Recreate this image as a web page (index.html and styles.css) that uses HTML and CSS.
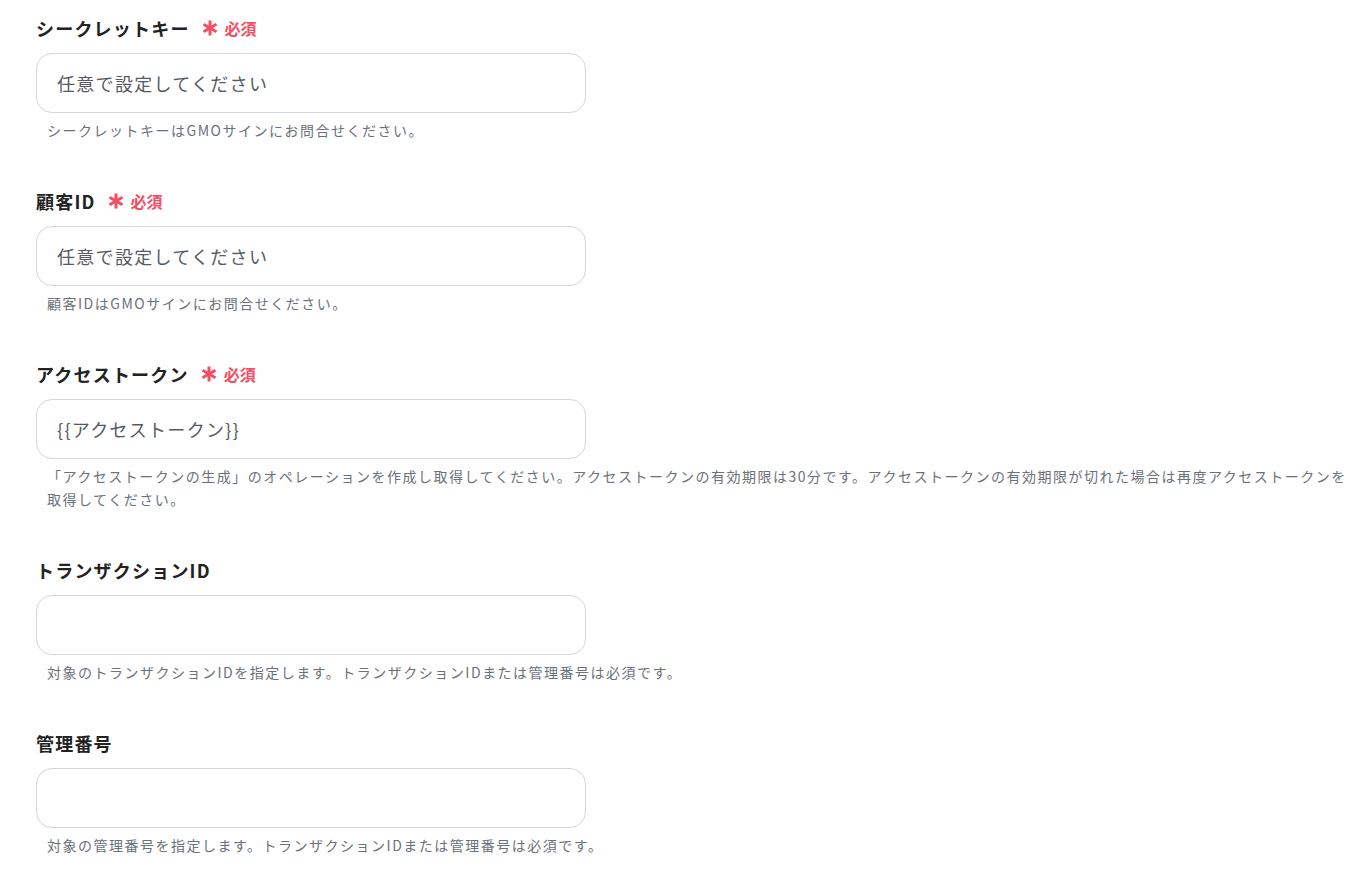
FILE: index.html
```html
<!DOCTYPE html>
<html lang="ja">
<head>
<meta charset="utf-8">
<link rel="stylesheet" href="styles.css">
</head>
<body>
<main class="form">
  <section class="field">
    <div class="label">シークレットキー <span class="req"><svg class="star" viewBox="0 0 16 16"><g stroke="currentColor" stroke-width="3" stroke-linecap="butt"><line x1="8" y1="0.5" x2="8" y2="15.5"/><line x1="1.5" y1="4.25" x2="14.5" y2="11.75"/><line x1="1.5" y1="11.75" x2="14.5" y2="4.25"/></g></svg>必須</span></div>
    <div class="input">任意で設定してください</div>
    <p class="help">シークレットキーはGMOサインにお問合せください。</p>
  </section>
  <section class="field">
    <div class="label">顧客ID <span class="req"><svg class="star" viewBox="0 0 16 16"><g stroke="currentColor" stroke-width="3" stroke-linecap="butt"><line x1="8" y1="0.5" x2="8" y2="15.5"/><line x1="1.5" y1="4.25" x2="14.5" y2="11.75"/><line x1="1.5" y1="11.75" x2="14.5" y2="4.25"/></g></svg>必須</span></div>
    <div class="input">任意で設定してください</div>
    <p class="help">顧客IDはGMOサインにお問合せください。</p>
  </section>
  <section class="field">
    <div class="label">アクセストークン <span class="req"><svg class="star" viewBox="0 0 16 16"><g stroke="currentColor" stroke-width="3" stroke-linecap="butt"><line x1="8" y1="0.5" x2="8" y2="15.5"/><line x1="1.5" y1="4.25" x2="14.5" y2="11.75"/><line x1="1.5" y1="11.75" x2="14.5" y2="4.25"/></g></svg>必須</span></div>
    <div class="input">{{アクセストークン}}</div>
    <p class="help">「アクセストークンの生成」のオペレーションを作成し取得してください。アクセストークンの有効期限は30分です。アクセストークンの有効期限が切れた場合は再度アクセストークンを取得してください。</p>
  </section>
  <section class="field">
    <div class="label">トランザクションID</div>
    <div class="input"></div>
    <p class="help">対象のトランザクションIDを指定します。トランザクションIDまたは管理番号は必須です。</p>
  </section>
  <section class="field">
    <div class="label">管理番号</div>
    <div class="input"></div>
    <p class="help">対象の管理番号を指定します。トランザクションIDまたは管理番号は必須です。</p>
  </section>
</main>
</body>
</html>
```
FILE: styles.css
```css
html, body {
  margin: 0;
  padding: 0;
  background: #ffffff;
}
body {
  font-family: "Noto Sans CJK JP", "Noto Sans", sans-serif;
  color: #222;
}
.form {
  padding: 16px 6px 0 36px;
  display: flex;
  flex-direction: column;
  gap: 47px;
}
.field {
  display: flex;
  flex-direction: column;
}
.label {
  font-size: 18px;
  font-weight: 700;
  line-height: 24px;
  letter-spacing: 1.2px;
  color: #222;
  display: flex;
  align-items: center;
  gap: 12px;
}
.req {
  color: #f54d62;
  font-size: 16px;
  font-weight: 700;
  letter-spacing: 0;
  display: inline-flex;
  align-items: center;
  gap: 7px;
}
.star {
  width: 16px;
  height: 16px;
  display: block;
}
.input {
  margin-top: 13px;
  width: 550px;
  height: 60px;
  box-sizing: border-box;
  border: 1px solid #d3d6db;
  border-radius: 16px;
  padding: 0 20px;
  display: flex;
  align-items: center;
  font-size: 18px;
  letter-spacing: 1.3px;
  color: #555b62;
}
.help {
  margin: 6px 0 0 0;
  padding-left: 11px;
  font-size: 14px;
  line-height: 23px;
  letter-spacing: 1.5px;
  color: #6b7178;
}
```
